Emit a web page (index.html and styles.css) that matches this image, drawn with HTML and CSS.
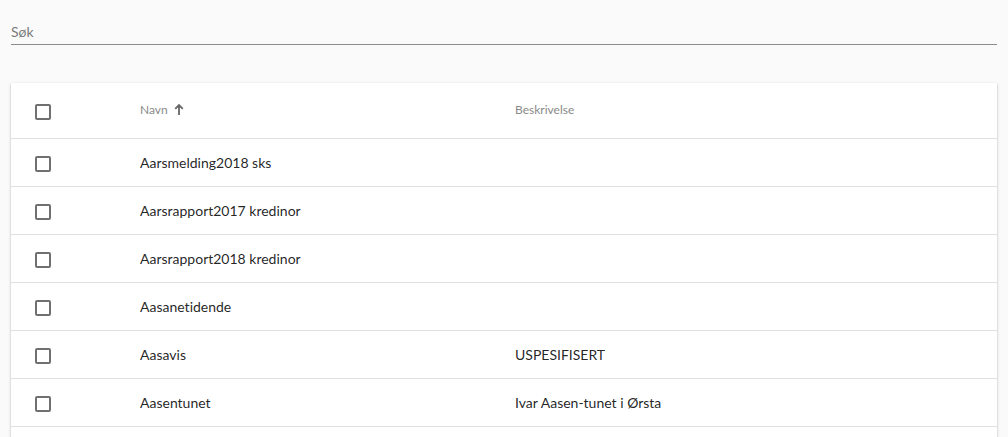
FILE: index.html
```html
<!DOCTYPE html>
<html lang="no">
<head>
<meta charset="utf-8">
<link rel="stylesheet" href="styles.css">
</head>
<body>
<div class="page">
  <div class="search">
    <input class="search-input" type="text" placeholder="Søk">
  </div>
  <div class="card">
    <div class="row header">
      <div class="cell check"><span class="box"></span></div>
      <div class="cell name">Navn
        <svg class="arrow" viewBox="0 0 10 12" width="10" height="12"><path d="M5 12V2M1.2 5.8L5 2l3.8 3.8" fill="none" stroke="currentColor" stroke-width="1.8"/></svg>
      </div>
      <div class="cell desc">Beskrivelse</div>
    </div>
    <div class="row"><div class="cell check"><span class="box"></span></div><div class="cell name">Aarsmelding2018 sks</div><div class="cell desc"></div></div>
    <div class="row"><div class="cell check"><span class="box"></span></div><div class="cell name">Aarsrapport2017 kredinor</div><div class="cell desc"></div></div>
    <div class="row"><div class="cell check"><span class="box"></span></div><div class="cell name">Aarsrapport2018 kredinor</div><div class="cell desc"></div></div>
    <div class="row"><div class="cell check"><span class="box"></span></div><div class="cell name">Aasanetidende</div><div class="cell desc"></div></div>
    <div class="row"><div class="cell check"><span class="box"></span></div><div class="cell name">Aasavis</div><div class="cell desc">USPESIFISERT</div></div>
    <div class="row"><div class="cell check"><span class="box"></span></div><div class="cell name">Aasentunet</div><div class="cell desc">Ivar Aasen-tunet i Ørsta</div></div>
    <div class="row"><div class="cell check"><span class="box"></span></div><div class="cell name"></div><div class="cell desc"></div></div>
  </div>
</div>
</body>
</html>
```
FILE: styles.css
```css
html, body {
  margin: 0;
  padding: 0;
  background: #fafafa;
  font-family: Lato, "Open Sans", sans-serif;
  font-variant-ligatures: none;
  overflow: hidden;
}
.page {
  padding: 0 11px;
}
.search {
  padding-top: 22px;
  height: 22px;
  border-bottom: 1px solid #8c8c8c;
  display: flex;
  align-items: flex-end;
}
.search-input {
  border: none;
  background: transparent;
  outline: none;
  font-family: inherit;
  font-size: 14px;
  padding: 0 0 4px 0;
  margin: 0;
  width: 100%;
  color: rgba(0,0,0,.87);
}
.search-input::placeholder {
  color: #7a7a7a;
}
.card {
  margin-top: 38px;
  background: #fff;
  box-shadow: 0 1px 3px rgba(0,0,0,.2), 0 1px 1px rgba(0,0,0,.14), 0 2px 1px -1px rgba(0,0,0,.12);
}
.row {
  display: flex;
  align-items: center;
  height: 47px;
  border-bottom: 1px solid #e0e0e0;
  font-size: 14px;
  color: rgba(0,0,0,.87);
}
.row.header {
  height: 55px;
  font-size: 12px;
  color: #8a8a8a;
}
.cell.check {
  width: 129px;
  padding-left: 24px;
  box-sizing: border-box;
  display: flex;
  align-items: center;
}
.box {
  width: 12px;
  height: 12px;
  border: 2px solid #707070;
  border-radius: 2px;
  display: block;
  margin-top: 2px;
}
.cell.name {
  width: 375px;
  display: flex;
  align-items: center;
}
.row.header .cell.name {
  margin-top: -2px;
}
.arrow {
  margin-left: 6px;
  margin-top: -2px;
  color: #666;
}
.cell.desc {
  flex: 1;
}
.row.header .cell.desc {
  margin-top: -2px;
}
```
